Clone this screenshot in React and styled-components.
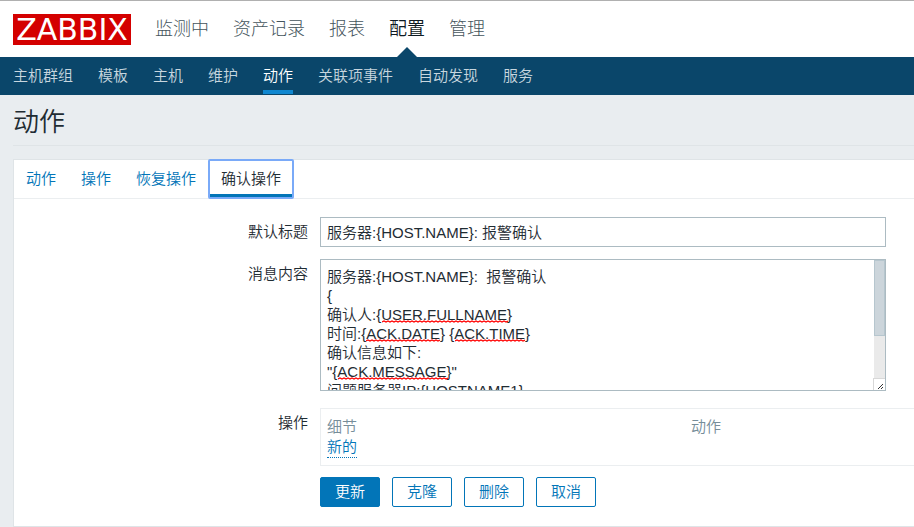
import React from "react";
import styled, { createGlobalStyle } from "styled-components";

const GlobalStyle = createGlobalStyle`
  *, *::before, *::after { box-sizing: border-box; }
  body {
    margin: 0;
    background: #e9edf0;
    color: #1f2c33;
    font-family: "Liberation Sans", "Noto Sans CJK SC", sans-serif;
    font-size: 15px;
    font-weight: 350;
    line-height: 20px;
    overflow-x: hidden;
  }
  input, textarea, button { font: inherit; color: inherit; }
`;

const Header = styled.header`
  display: flex;
  align-items: center;
  height: 57px;
  padding: 0 13px;
  border-top: 1px solid #b0b0b0;
  background: #fff;
`;

const Logo = styled.a`
  width: 118px;
  height: 31px;
  margin-right: 24px;
  background: #d40000;
  color: #fff;
  font-family: "DejaVu Sans", sans-serif;
  font-size: 30px;
  font-weight: 400;
  line-height: 31px;
  text-align: center;
  text-decoration: none;
  white-space: nowrap;
`;

const MainNav = styled.nav`
  display: flex;
  gap: 24px;
  height: 100%;
`;

const MainLink = styled.a`
  position: relative;
  color: ${(p) => (p.$active ? "#0e1a22" : "#45545c")};
  font-size: 18px;
  font-weight: ${(p) => (p.$active ? 350 : 300)};
  line-height: 57px;
  text-decoration: none;

  &::after {
    content: "";
    display: ${(p) => (p.$active ? "block" : "none")};
    position: absolute;
    bottom: 0;
    left: 50%;
    margin-left: -10px;
    border: 10px solid transparent;
    border-top-width: 0;
    border-bottom-color: #0a466a;
  }
`;

const SubNav = styled.nav`
  display: flex;
  gap: 25px;
  height: 38px;
  padding: 0 13px;
  background: #0a466a;
`;

const SubLink = styled.a`
  height: 37px;
  border-bottom: 4px solid ${(p) => (p.$active ? "#0f87d0" : "transparent")};
  color: ${(p) => (p.$active ? "#fff" : "#c7d6df")};
  line-height: 37px;
  text-decoration: none;
`;

const Page = styled.main`
  padding-left: 13px;
`;

const Title = styled.h1`
  margin: 0 0 13px;
  padding: 12px 0 8px;
  border-bottom: 1px solid #dfe4e7;
  font-size: 26px;
  font-weight: 350;
  line-height: 30px;
`;

const Panel = styled.section`
  border: 1px solid #dfe4e7;
  border-right: 0;
  background: #fff;
`;

const Tabs = styled.div`
  display: flex;
  height: 39px;
  border-bottom: 1px solid #ebeef0;
`;

const Tab = styled.button`
  height: 38px;
  padding: 3px 12px 0;
  border: 0;
  border-bottom: 4px solid ${(p) => (p.$active ? "#0275b8" : "transparent")};
  background: transparent;
  color: ${(p) => (p.$active ? "#1f2c33" : "#0275b8")};
  line-height: 31px;
  cursor: pointer;
  outline: ${(p) => (p.$active ? "2px solid #7aaaf8" : "none")};
  outline-offset: -1px;
  border-radius: 1px;

  & + & { margin-left: 1px; }
`;

const Form = styled.form`
  padding: 18px 0 19px;
`;

const Row = styled.div`
  display: grid;
  grid-template-columns: 294px minmax(0, 1fr);
  column-gap: 12px;
  margin-top: ${(p) => p.$gap || 0}px;
`;

const Label = styled.label`
  padding-top: 5px;
  text-align: right;
`;

const TextInput = styled.input`
  width: 100%;
  max-width: 566px;
  height: 30px;
  padding: 0 6px 2px;
  border: 1px solid #acbbc2;
  background: #fff;
  outline: none;
`;

const Editor = styled.div`
  position: relative;
  max-width: 566px;
  height: 132px;
`;

const TextArea = styled.textarea`
  display: block;
  width: 100%;
  height: 100%;
  padding: 7px 17px 5px 6px;
  border: 1px solid #acbbc2;
  background: #fff;
  line-height: 19px;
  outline: none;
  resize: none;
  scrollbar-width: none;
`;

const ScrollTrack = styled.div`
  position: absolute;
  top: 1px;
  right: 1px;
  bottom: 1px;
  display: flex;
  flex-direction: column;
  justify-content: space-between;
  width: 11px;
  background: #eaeaea;
`;

const ScrollThumb = styled.div`
  height: 76px;
  border: 1px solid #b6c6ce;
  background: #ccd5db;
`;

const Grip = styled.svg`
  width: 12px;
  height: 12px;
  margin-left: -1px;
  border-top: 1px solid #d8d8d8;
  border-left: 1px solid #d8d8d8;
  background: #fff;
`;

const Squiggle = styled.svg`
  position: absolute;
  top: ${(p) => p.$top}px;
  left: ${(p) => p.$left}px;
  width: ${(p) => p.$width}px;
  height: 3px;
  pointer-events: none;
`;

const TableBox = styled.div`
  padding: 8px 6px 7px;
  border: 1px solid #ebeef0;
  border-right: 0;
`;

const Table = styled.table`
  width: 100%;
  border-collapse: collapse;
  table-layout: fixed;

  th, td { padding: 0; text-align: left; font-weight: inherit; vertical-align: top; }
  th { color: #768d99; }
  th:first-child { width: 364px; }
`;

const NewLink = styled.a`
  display: block;
  width: max-content;
  border-bottom: 1px dotted #0275b8;
  color: #0275b8;
  text-decoration: none;
`;

const Actions = styled.div`
  display: flex;
  grid-column: 2;
  gap: 12px;
`;

const Button = styled.button`
  width: 60px;
  height: 30px;
  padding: 0;
  border: 1px solid #0275b8;
  border-radius: 2px;
  background: ${(p) => (p.$primary ? "#0275b8" : "#fff")};
  color: ${(p) => (p.$primary ? "#fff" : "#0275b8")};
  line-height: 28px;
  cursor: pointer;
`;

const MAIN = ["监测中", "资产记录", "报表", "配置", "管理"];
const SUB = ["主机群组", "模板", "主机", "维护", "动作", "关联项事件", "自动发现", "服务"];
const TABS = ["动作", "操作", "恢复操作", "确认操作"];
const MESSAGE = `服务器:{HOST.NAME}:  报警确认
{
确认人:{USER.FULLNAME}
时间:{ACK.DATE} {ACK.TIME}
确认信息如下:
"{ACK.MESSAGE}"
问题服务器IP:{HOSTNAME1}
}

`;
const MISSPELLED = [
  { top: 61, left: 62, width: 126 },
  { top: 80, left: 46, width: 75 },
  { top: 80, left: 135, width: 70 },
  { top: 118, left: 18, width: 110 },
];

function SpellMark({ top, left, width }) {
  let d = "M0 2";
  for (let x = 2; x <= width; x += 2) d += ` L${x} ${x % 4 ? 1 : 2}`;
  return (
    <Squiggle $top={top} $left={left} $width={width} aria-hidden="true">
      <path d={d} fill="none" stroke="#f00" strokeWidth="1.3" />
    </Squiggle>
  );
}

export default function App() {
  return (
    <>
      <GlobalStyle />
      <Header>
        <Logo href="#">ZABBIX</Logo>
        <MainNav>
          {MAIN.map((t) => (
            <MainLink key={t} href="#" $active={t === "配置"}>{t}</MainLink>
          ))}
        </MainNav>
      </Header>
      <SubNav>
        {SUB.map((t) => (
          <SubLink key={t} href="#" $active={t === "动作"}>{t}</SubLink>
        ))}
      </SubNav>
      <Page>
        <Title>动作</Title>
        <Panel>
          <Tabs role="tablist">
            {TABS.map((t) => (
              <Tab key={t} type="button" role="tab" aria-selected={t === "确认操作"} $active={t === "确认操作"}>
                {t}
              </Tab>
            ))}
          </Tabs>
          <Form onSubmit={(e) => e.preventDefault()}>
            <Row>
              <Label htmlFor="subject">默认标题</Label>
              <TextInput id="subject" type="text" defaultValue="服务器:{HOST.NAME}: 报警确认" />
            </Row>
            <Row $gap={12}>
              <Label htmlFor="message">消息内容</Label>
              <Editor>
                <TextArea id="message" spellCheck={false} defaultValue={MESSAGE} />
                {MISSPELLED.map((m) => (
                  <SpellMark key={`${m.top}-${m.left}`} {...m} />
                ))}
                <ScrollTrack aria-hidden="true">
                  <ScrollThumb />
                  <Grip viewBox="0 0 11 11">
                    <path d="M4 9.5h1M5 8.5h1M6 7.5h1M7 6.5h1M8 5.5h1M7 9.5h1M8 8.5h1" stroke="#333" fill="none" />
                  </Grip>
                </ScrollTrack>
              </Editor>
            </Row>
            <Row $gap={17}>
              <Label as="span" id="operations">操作</Label>
              <TableBox>
                <Table aria-labelledby="operations">
                  <thead>
                    <tr><th>细节</th><th>动作</th></tr>
                  </thead>
                  <tbody>
                    <tr><td colSpan={2}><NewLink href="#">新的</NewLink></td></tr>
                  </tbody>
                </Table>
              </TableBox>
            </Row>
            <Row $gap={11}>
              <Actions>
                <Button type="submit" $primary>更新</Button>
                <Button type="button">克隆</Button>
                <Button type="button">删除</Button>
                <Button type="button">取消</Button>
              </Actions>
            </Row>
          </Form>
        </Panel>
      </Page>
    </>
  );
}
